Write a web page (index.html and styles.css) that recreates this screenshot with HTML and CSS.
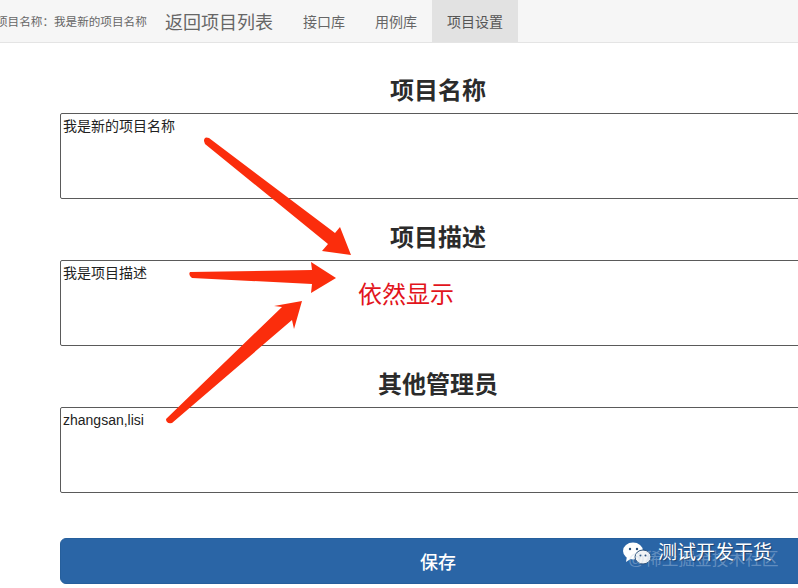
FILE: index.html
```html
<!DOCTYPE html>
<html lang="zh">
<head>
<meta charset="utf-8">
<title>项目设置</title>
<link rel="stylesheet" href="styles.css">
</head>
<body>
<nav class="navbar">
  <span class="project-name">项目名称：我是新的项目名称</span>
  <a class="brand">返回项目列表</a>
  <a class="nav-item">接口库</a>
  <a class="nav-item">用例库</a>
  <a class="nav-item active">项目设置</a>
</nav>
<main class="form">
  <section class="field">
    <h2>项目名称</h2>
    <textarea readonly>我是新的项目名称</textarea>
  </section>
  <section class="field">
    <h2>项目描述</h2>
    <textarea readonly>我是项目描述</textarea>
  </section>
  <section class="field">
    <h2>其他管理员</h2>
    <textarea readonly>zhangsan,lisi</textarea>
  </section>
  <button class="save">保存</button>
</main>
<svg class="arrows" width="798" height="588" viewBox="0 0 798 588" aria-hidden="true">
  <path d="M204 141Q204 136 209 138L335 233L340 227L351 255L322 251L328 244L205 144Z"/>
  <path d="M190 272L312 270L311 262L336 278L311 293L312 284L192 278Q188 275 190 272Z"/>
  <path d="M166 419L282 307L274 306L302 301L294 329L292 320L172 423Q166 424 166 419Z"/>
</svg>
<p class="note">依然显示</p>
<div class="watermark">
  <svg class="wechat" width="30" height="24" viewBox="0 0 30 24" aria-hidden="true">
    <ellipse class="bubble" cx="11" cy="9" rx="10" ry="8.5"/>
    <path class="bubble" d="M5 14L4 20L10 16Z"/>
    <ellipse class="bubble small" cx="21" cy="15" rx="8" ry="7"/>
    <circle class="eye" cx="8" cy="7" r="1.2"/>
    <circle class="eye" cx="15" cy="7" r="1.2"/>
    <circle class="eye" cx="18.5" cy="13.5" r="1"/>
    <circle class="eye" cx="23.5" cy="13.5" r="1"/>
  </svg>
  <span class="community">@稀土掘金技术社区</span>
  <span class="account">测试开发干货</span>
</div>
</body>
</html>
```

FILE: styles.css
```css
html, body {
  margin: 0;
  height: 588px;
  overflow: hidden;
  background: #fff;
}

body {
  position: relative;
  font-family: "Liberation Sans", "Noto Sans CJK SC", sans-serif;
  color: #222;
}

.navbar {
  display: flex;
  align-items: center;
  height: 42px;
  background: #f6f6f6;
  border-bottom: 1px solid #e4e4e4;
  color: #666;
  white-space: nowrap;
}

.project-name {
  flex: none;
  width: 169px;
  margin-left: -4px;
  font-size: 11.6px;
}

.brand {
  flex: none;
  width: 123px;
  font-size: 18px;
}

.nav-item {
  display: flex;
  align-items: center;
  align-self: stretch;
  padding: 0 15px;
  font-size: 14px;
  color: #666;
}

.nav-item.active {
  background: #e2e2e2;
  color: #555;
}

.form {
  width: 756px;
  margin-left: 60px;
  padding-top: 35px;
}

.field {
  margin-bottom: 26px;
}

.field h2 {
  margin: 0 0 9px;
  font-size: 24px;
  line-height: 26px;
  font-weight: 700;
  text-align: center;
  color: #2b2b2b;
}

.field textarea {
  display: block;
  box-sizing: border-box;
  width: 100%;
  height: 86px;
  padding: 2px;
  border: 1px solid #5a5a5a;
  border-radius: 2px;
  font: 14px/20px "Liberation Sans", "Noto Sans CJK SC", sans-serif;
  color: #222;
  background: #fff;
  resize: none;
  outline: none;
}

.save {
  display: block;
  width: 100%;
  height: 46px;
  margin-top: 45px;
  border: 1px solid #265f9c;
  border-radius: 6px;
  background: #2a65a6;
  color: #fff;
  font: 500 18px "Liberation Sans", "Noto Sans CJK SC", sans-serif;
}

.arrows {
  position: absolute;
  left: 0;
  top: 0;
}

.arrows path {
  fill: #fb2d0c;
}

.note {
  position: absolute;
  left: 358px;
  top: 280px;
  margin: 0;
  font-size: 24px;
  line-height: 30px;
  color: #e2141c;
}

.watermark {
  position: absolute;
  left: 622px;
  top: 542px;
  width: 176px;
  height: 32px;
}

.wechat {
  position: absolute;
  left: 0;
  top: 0;
}

.bubble {
  fill: #fff;
}

.bubble.small {
  fill: #f2f4f6;
  stroke: #2a4f78;
  stroke-width: 1;
}

.eye {
  fill: #2a4f78;
}

.account {
  position: absolute;
  left: 36px;
  top: -1px;
  font-size: 19px;
  line-height: 24px;
  white-space: nowrap;
  color: #fff;
  text-shadow: 1px 1px 1px rgba(20, 40, 70, .6);
}

.community {
  position: absolute;
  left: 6px;
  top: 8px;
  font-size: 16.7px;
  line-height: 20px;
  white-space: nowrap;
  color: rgba(190, 210, 230, .4);
}
```
